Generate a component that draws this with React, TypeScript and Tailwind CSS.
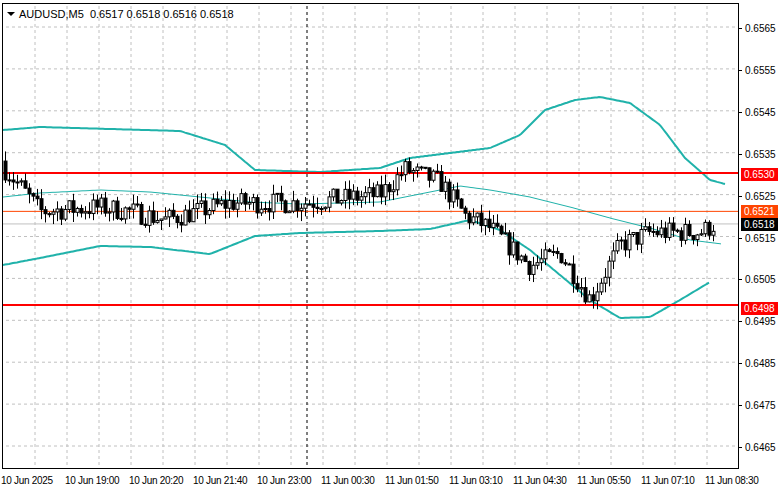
import React from 'react';

const Y = (p: number) => 27 + (0.6565 - p) * 41900;

const pricePath: [number, number][] = [
  [5, 0.6531], [20, 0.6527], [40, 0.6521], [100, 0.6522], [130, 0.6521], [165, 0.6519], [230, 0.6523],
  [300, 0.6523], [380, 0.6525], [405, 0.6531], [440, 0.6528], [465, 0.652], [490, 0.6517],
  [530, 0.6508], [560, 0.6511], [590, 0.65], [620, 0.6513], [650, 0.6516], [700, 0.6516], [715, 0.6518],
];

const interp = (pts: [number, number][], x: number) => {
  for (let i = 1; i < pts.length; i++) {
    if (x <= pts[i][0]) {
      const [x0, y0] = pts[i - 1];
      const [x1, y1] = pts[i];
      return y0 + ((x - x0) / (x1 - x0)) * (y1 - y0);
    }
  }
  return pts[pts.length - 1][1];
};

let seed = 7;
const rnd = () => {
  seed = (seed * 16807) % 2147483647;
  return seed / 2147483647;
};

const candles = (() => {
  const out: { x: number; o: number; c: number; h: number; l: number }[] = [];
  let prev = 0.6533;
  for (let x = 5; x <= 715; x += 4) {
    const c = interp(pricePath, x) + (rnd() - 0.5) * 0.0005;
    const o = prev;
    const h = Math.max(o, c) + rnd() * 0.00025;
    const l = Math.min(o, c) - rnd() * 0.00025;
    out.push({ x, o, c, h, l });
    prev = c;
  }
  return out;
})();

const upper: [number, number][] = [[3,130],[40,127],[180,131],[225,145],[255,170],[320,172],[380,168],[410,158],[450,153],[490,148],[520,135],[545,110],[575,100],[600,97],[630,103],[660,125],[685,158],[710,180],[725,184]];
const middle: [number, number][] = [[3,197],[40,193],[100,190],[150,192],[200,197],[250,202],[300,204],[380,202],[420,194],[460,186],[490,190],[530,197],[570,207],[610,218],[650,228],[690,240],[722,244]];
const lower: [number, number][] = [[3,265],[40,258],[100,246],[150,247],[210,254],[255,236],[300,233],[380,231],[430,229],[470,220],[500,230],[530,250],[560,275],[590,300],[620,318],[650,317],[680,300],[710,282]];

const smooth = (pts: [number, number][]) => {
  const r: string[] = [];
  for (let x = pts[0][0]; x <= pts[pts.length - 1][0]; x += 2) r.push(`${x},${interp(pts, x).toFixed(1)}`);
  return r.join(' ');
};

const axisPrices = [0.6565, 0.6555, 0.6545, 0.6535, 0.6525, 0.6515, 0.6505, 0.6495, 0.6485, 0.6475, 0.6465];
const times = ['10 Jun 2025', '10 Jun 19:00', '10 Jun 20:20', '10 Jun 21:40', '10 Jun 23:00', '11 Jun 00:30', '11 Jun 01:50', '11 Jun 03:10', '11 Jun 04:30', '11 Jun 05:50', '11 Jun 07:10', '11 Jun 08:30'];

const tags = [
  { p: 0.653, t: '0.6530', cls: 'bg-[#ff0000] text-white' },
  { p: 0.6521, t: '0.6521', cls: 'bg-[#ff4500] text-white' },
  { p: 0.6518, t: '0.6518', cls: 'bg-black text-white' },
  { p: 0.6498, t: '0.6498', cls: 'bg-[#ff0000] text-white' },
];

export default function App() {
  return (
    <div className="w-[781px] h-[489px] bg-white flex flex-col pt-[3px] pl-[2px] overflow-hidden" style={{ fontFamily: '"Liberation Sans", Arial, sans-serif' }}>
      <div className="flex h-[466px]">
        <div className="relative w-[737px] border border-black">
          <svg className="absolute inset-0" width="735" height="464" viewBox="3 4 735 464">
            {Array.from({ length: 22 }, (_, i) => 35 + i * 32).map(x => (
              <line key={x} x1={x} y1={0} x2={x} y2={470} stroke="#c0c0c0" strokeDasharray="3 3" />
            ))}
            {axisPrices.map(p => (
              <line key={p} x1={0} y1={Y(p)} x2={740} y2={Y(p)} stroke="#c0c0c0" strokeDasharray="3 3" />
            ))}
            <line x1={307} y1={0} x2={307} y2={470} stroke="#000" strokeDasharray="3 3" />
            <line x1={0} y1={Y(0.6518)} x2={740} y2={Y(0.6518)} stroke="#c0c0c0" />
            <polyline points={smooth(upper)} fill="none" stroke="#20b2aa" strokeWidth={2} />
            <polyline points={smooth(middle)} fill="none" stroke="#20b2aa" strokeWidth={1} />
            <polyline points={smooth(lower)} fill="none" stroke="#20b2aa" strokeWidth={2} />
            <line x1={0} y1={173} x2={740} y2={173} stroke="#ff0000" strokeWidth={2} />
            <line x1={0} y1={Y(0.6521)} x2={740} y2={Y(0.6521)} stroke="#ff4500" />
            <line x1={0} y1={305} x2={740} y2={305} stroke="#ff0000" strokeWidth={2} />
            {candles.map((c, i) => {
              const top = Y(Math.max(c.o, c.c));
              const bot = Y(Math.min(c.o, c.c));
              const bull = c.c >= c.o;
              return (
                <g key={i}>
                  <line x1={c.x + 0.5} y1={Y(c.h)} x2={c.x + 0.5} y2={Y(c.l)} stroke="#000" />
                  <rect x={c.x - 1} y={top} width={3} height={Math.max(bot - top, 1)} fill={bull ? '#fff' : '#000'} stroke="#000" strokeWidth={1} />
                </g>
              );
            })}
          </svg>
          <div className="absolute left-[4px] top-[2px] flex items-center gap-[4px] text-[11px] text-black">
            <span className="w-0 h-0 border-l-[4px] border-r-[4px] border-t-[4px] border-l-transparent border-r-transparent border-t-black" />
            <span>AUDUSD,M5&nbsp; 0.6517 0.6518 0.6516 0.6518</span>
          </div>
        </div>
        <div className="relative flex-1 text-[10px] text-black">
          {axisPrices.map(p => (
            <div key={p} className="absolute left-0 flex items-center" style={{ top: Y(p) - 9 }}>
              <span className="w-[3px] h-px bg-black" />
              <span className="ml-[3px]">{p.toFixed(4)}</span>
            </div>
          ))}
          {tags.map(t => (
            <div key={t.t} className={`absolute left-[2px] px-[3px] leading-[13px] ${t.cls}`} style={{ top: Y(t.p) - 9 }}>
              {t.t}
            </div>
          ))}
        </div>
      </div>
      <div className="flex text-[10px] text-black mt-[4px] -ml-[1px]">
        {times.map(t => (
          <div key={t} className="w-[64px] shrink-0 whitespace-nowrap tracking-[-0.3px]">{t}</div>
        ))}
      </div>
    </div>
  );
}
